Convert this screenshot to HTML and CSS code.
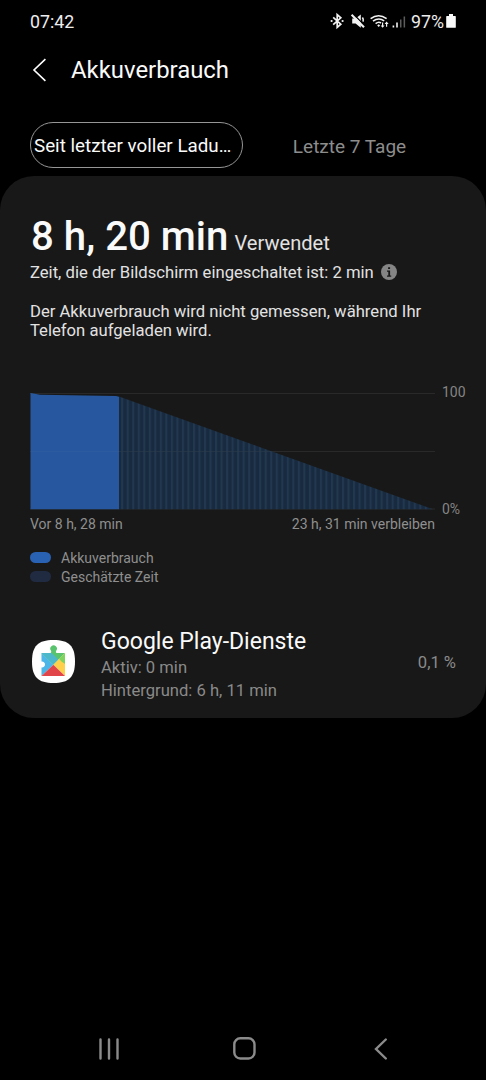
FILE: index.html
```html
<!DOCTYPE html>
<html lang="de">
<head>
<meta charset="utf-8">
<title>Akkuverbrauch</title>
<link rel="stylesheet" href="styles.css">
</head>
<body>
<div class="screen">
  <header class="status">
    <span class="time">07:42</span>
    <div class="status-right">
      <svg class="status-icons" width="78" height="18" viewBox="0 0 78 18">
        <g fill="none" stroke="#f2f2f2" stroke-width="1.7">
          <path d="M3.2 5.4L10.8 12.2L7.2 15.4V2.6L10.8 5.8L3.2 12.6"/>
          <path d="M22.2 6.6H25.6L30.8 2.4V15.8L25.6 11.6H22.2z" fill="#f2f2f2" stroke="none"/>
          <path d="M23 1.8L35.4 14.2" stroke="#000" stroke-width="1.3"/>
          <path d="M21.6 2.8L34 15.2" stroke-width="2.1"/>
          <path d="M32.4 5.4q1.4 1.8 .7 4.2" stroke-width="1.6"/>
          <path d="M40.6 6.6Q48.6 .8 56.6 6.6M43 9.2Q48.6 5 54.2 8.8M45.6 11.6Q48.6 9.2 51 11" stroke-width="1.6"/>
        </g>
        <g fill="#f2f2f2">
          <path d="M47.2 13.4l1.5-1.2 1.4 1.2-1.4 1.6z"/>
          <path d="M52 10.6h1.2v2.8h1.4l-2 2.4-2-2.4H52zM56 14.8h1.2V12h1.4l-2-2.4-2 2.4H56z"/>
          <circle cx="1.6" cy="9" r="1.1"/><circle cx="12.6" cy="9" r="1.1"/>
          <path d="M62.6 13.4h1.6v2h-1.6zM66.2 10.6h1.6v4.8h-1.6z"/>
        </g>
        <path d="M70 7.6h1.5v7.8H70zM73.6 4.4h1.5v11h-1.5z" fill="#5c5c5c"/>
      </svg>
      <span class="percent">97%</span>
      <svg width="10" height="14" viewBox="0 0 10 14"><path d="M3 0h4v2h2.2q.6 0 .6.6v10.6q0 .6-.6.6H.8q-.6 0-.6-.6V2.6Q.2 2 .8 2H3z" fill="#fafafa"/></svg>
    </div>
  </header>

  <div class="titlebar">
    <svg width="14" height="24" viewBox="0 0 14 24"><path d="M13.4 1.2L2 12L13.4 22.8" fill="none" stroke="#fff" stroke-width="1.6"/></svg>
    <h1 class="title">Akkuverbrauch</h1>
  </div>

  <nav class="tabs">
    <div class="tab active">Seit letzter voller Ladu…</div>
    <div class="tab">Letzte 7 Tage</div>
  </nav>

  <main class="card">
    <div class="usage"><strong class="duration">8 h, 20 min</strong><span class="used">Verwendet</span></div>
    <div class="screen-time">
      <span class="body-text">Zeit, die der Bildschirm eingeschaltet ist: 2 min</span>
      <svg width="16" height="16" viewBox="0 0 16 16"><circle cx="8" cy="8" r="8" fill="#858585"/><path d="M7.1 3.2h2v1.9h-2zM6 6.4h3.1v5h1.1v1.3H6v-1.3h1.3V7.7H6z" fill="#181818"/></svg>
    </div>
    <p class="body-text note">Der Akkuverbrauch wird nicht gemessen, während Ihr<br>Telefon aufgeladen wird.</p>

    <div class="chart-row">
      <svg width="405" height="120" viewBox="0 0 405 120">
        <defs>
          <pattern id="stripes" x="91.2" width="5.52" height="120" patternUnits="userSpaceOnUse">
            <rect width="5.52" height="120" fill="#182a3f"/>
            <rect width="2" height="120" fill="#22384f"/>
          </pattern>
        </defs>
        <path d="M0 3.5H405M0 61.5H405M0 119H405" stroke="#292929"/>
        <path d="M89 6.5L403 119.2H89z" fill="url(#stripes)"/>
        <path d="M.5 3L10 4.7L86 6L89 6.8V119.2H.5z" fill="#27589f"/>
        <path d="M1 61.5H89" stroke="#2c5ba0"/>
        <path d="M89 61.5H241" stroke="#2b3b4b" opacity=".6"/>
      </svg>
      <div class="scale"><span>100</span><span>0%</span></div>
    </div>
    <div class="range"><span>Vor 8 h, 28 min</span><span class="remaining">23 h, 31 min verbleiben</span></div>
    <div class="legend">
      <div class="legend-item"><i class="swatch"></i><span>Akkuverbrauch</span></div>
      <div class="legend-item"><i class="swatch estimated"></i><span>Geschätzte Zeit</span></div>
    </div>

    <div class="app">
      <svg width="43" height="43" viewBox="0 0 43 43">
        <path d="M21.5 0C37 0 43 6 43 21.5S37 43 21.5 43 0 37 0 21.5 6 0 21.5 0z" fill="#fff"/>
        <path d="M9.5 13L21.3 24.7L9.5 36V27.5A3 3 0 1 0 9.5 21.6z" fill="#4db6e8"/>
        <path d="M9.5 13H18.6Q19.8 12.2 19 10.8A3.3 3.3 0 1 1 24.2 10.8Q23.3 12.2 24.5 13H33L21.3 24.7z" fill="#58c46e"/>
        <path d="M9.5 13L21.3 24.7L26.5 19.5L19.5 13z" fill="#4db8c9"/>
        <path d="M33 13V36L21.3 24.7z" fill="#ffd04b"/>
        <path d="M27 18.7L33 13V24L29.5 21.5z" fill="#7ed45e"/>
        <path d="M9.5 36L21.3 24.7L33 36z" fill="#e14549"/>
      </svg>
      <div class="app-info">
        <div class="app-name">Google Play-Dienste</div>
        <div class="app-line">Aktiv: 0 min</div>
        <div class="app-line">Hintergrund: 6 h, 11 min</div>
      </div>
      <div class="app-percent">0,1 %</div>
    </div>
  </main>

  <footer class="navbar">
    <svg width="20" height="22" viewBox="0 0 20 22"><path d="M1.5 1.5V20.5M10 1.5V20.5M18.5 1.5V20.5" stroke="#8b8b8b" stroke-width="2.4" stroke-linecap="round"/></svg>
    <svg class="home" width="23" height="23" viewBox="0 0 23 23"><rect x="1.3" y="1.3" width="20.2" height="20.2" rx="6" fill="none" stroke="#8b8b8b" stroke-width="2.4"/></svg>
    <svg width="13" height="22" viewBox="0 0 13 22"><path d="M11.8 1.5L2 11L11.8 20.5" fill="none" stroke="#8b8b8b" stroke-width="2.4" stroke-linecap="round"/></svg>
  </footer>
</div>
</body>
</html>
```
FILE: styles.css
```css
body { margin: 0; background: #000; font-family: Roboto, "Noto Sans", sans-serif; color: #fafafa; }
svg { display: block; flex: none; }
.screen { width: 486px; height: 1080px; display: flex; flex-direction: column; overflow: hidden; }
.screen span, .tab, .app-info div { white-space: nowrap; }

.status { height: 42px; box-sizing: border-box; padding: 0 30px; display: flex; justify-content: space-between; align-items: center; color: #ededed; }
.time { font-size: 17.8px; }
.status-right { display: flex; align-items: center; }
.status-icons { margin: 0 3px 0 0; }
.percent { font-size: 17.8px; margin-right: 2px; }
.status-right svg:last-child { margin-top: -1px; }

.titlebar { height: 56px; display: flex; align-items: center; gap: 25px; padding: 0 32px; }
.title { margin: 0; font-size: 23.9px; font-weight: 400; line-height: 58px; }

.tabs { margin-top: 24px; height: 46px; padding: 0 30px; display: flex; }
.tab { width: 213px; height: 46px; box-sizing: border-box; font-size: 19px; line-height: 49px; text-align: center; color: #8d8d8d; }
.tab.active { border: 1.5px solid #969696; border-radius: 23px; font-size: 18.8px; line-height: 47px; padding-left: 3px; text-align: left; color: #fafafa; }

.card { margin-top: 8px; height: 542px; box-sizing: border-box; background: #181818; border-radius: 34px; padding: 34px 30px 0; }
.usage { height: 50px; line-height: 53px; display: flex; align-items: baseline; gap: 6px; padding-left: 1px; }
.duration { font-size: 40.2px; font-weight: 500; }
.used { font-size: 20.1px; color: #e2e2e2; }
.screen-time { height: 24px; display: flex; align-items: center; gap: 7px; }
.body-text { font-size: 16.65px; color: #e2e2e2; }
.note { margin: 18px 0 0; line-height: 19px; white-space: nowrap; }
.chart-row { margin-top: 50px; display: flex; }
.scale { margin: -6px 0 -7px 7px; display: flex; flex-direction: column; justify-content: space-between; font-size: 14px; line-height: 16px; color: #858585; }
.range { margin-top: 5px; width: 405px; height: 18px; line-height: 18px; display: flex; justify-content: space-between; font-size: 14px; color: #8f8f8f; }
.remaining { font-size: 14px; }
.legend { margin-top: 15px; color: #8f8f8f; font-size: 14px; }
.legend-item { height: 19px; display: flex; align-items: center; gap: 10px; }
.swatch { width: 21px; height: 11px; border-radius: 6px; background: #2961b3; }
.swatch.estimated { background: #202b42; }
.app { margin: 36px 0 0 2px; display: flex; align-items: center; }
.app > svg { margin-top: -2px; }
.app-info { margin-left: 26px; padding-top: 5px; flex: 1; }
.app-name { font-size: 23px; line-height: 29px; }
.app-line { font-size: 16.6px; line-height: 23px; color: #8a8a8a; }
.app-percent { font-size: 16.6px; color: #8a8a8a; }

.navbar { margin-top: auto; height: 63px; padding: 0 99px; display: flex; justify-content: space-between; align-items: center; }
.home { margin-right: 4px; }
```
